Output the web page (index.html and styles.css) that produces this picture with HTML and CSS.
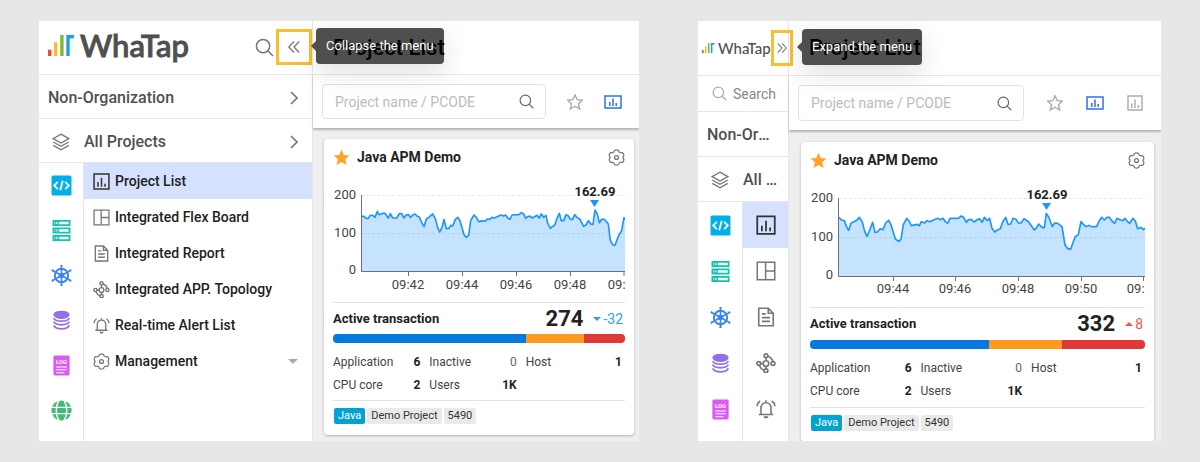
FILE: index.html
```
<!DOCTYPE html>
<html lang="en">
<head>
<meta charset="utf-8">
<title>WhaTap Project List</title>
<link rel="stylesheet" href="styles.css">
</head>
<body>
<svg class="sprite" aria-hidden="true">
  <symbol id="i-logo" viewBox="0 0 27 21">
    <path fill="#f04e23" d="M0 14.700h3.400V21H0z"/><path fill="#fdb733" d="M6 7.300h3.400V21H6z"/>
    <path fill="#7fb92b" d="M12.200 0h3.400v21h-3.400z"/><path fill="#1ea0e6" d="M18.300 0H26.500L25.500 3.500H21.700V21h-3.400z"/>
  </symbol>
  <symbol id="i-search" viewBox="0 0 20 20"><g fill="none" stroke="currentColor" stroke-width="1.600"><circle cx="8.500" cy="8.500" r="7"/><path d="M13.500 13.500L19 19"/></g></symbol>
  <symbol id="i-left" viewBox="0 0 12 12"><path fill="none" stroke="currentColor" stroke-width="1.300" d="M6 .5L.8 6L6 11.500M11.200 .5L6 6l5.200 5.500"/></symbol>
  <symbol id="i-right" viewBox="0 0 12 12"><path fill="none" stroke="currentColor" stroke-width="1.300" d="M.8 .5L6 6L.8 11.500M6 .5L11.200 6L6 11.500"/></symbol>
  <symbol id="i-chev" viewBox="0 0 8 14"><path fill="none" stroke="currentColor" stroke-width="1.600" d="M1 1l6 6l-6 6"/></symbol>
  <symbol id="i-layers" viewBox="0 0 18 18"><g fill="none" stroke="currentColor" stroke-width="1.400"><path d="M9 1.200L16.800 5.600L9 10L1.200 5.600z"/><path d="M1.200 9L9 13.300L16.800 9M1.200 12.400L9 16.800l7.800-4.400"/></g></symbol>
  <symbol id="i-code" viewBox="0 0 20 20"><rect x=".5" y=".5" width="19" height="19" rx="1.500" fill="#00b0e6"/><path fill="none" stroke="#fff" stroke-width="1.700" d="M6.500 6.500L3 10l3.500 3.500M13.500 6.500L17 10l-3.500 3.500M11.200 5.500L8.800 14.500"/></symbol>
  <symbol id="i-server" viewBox="0 0 20 20"><g fill="none" stroke="#10c5ad" stroke-width="1.700"><path d="M2.300 .9h15.400v4H2.300zM2.300 8h15.400v4H2.300zM2.300 15.100h15.400v4H2.300z"/><path d="M5.500 1v3.800M5.500 8v4M5.500 15.200v3.800" stroke-width="4"/></g><path fill="#fff" d="M4.600 2.100h1.600v1.600H4.600zM4.600 9.200h1.600v1.600H4.600zM4.600 16.300h1.600v1.600H4.600z"/></symbol>
  <symbol id="i-helm" viewBox="0 0 22 22"><g fill="none" stroke="#3b82f6" stroke-width="2"><circle cx="11" cy="11" r="7"/><path stroke-width="1.700" d="M11 0v22M1.200 5.500l19.600 11M1.200 16.500l19.600-11"/><path stroke-width="1.200" d="M9.800 .8h2.400M9.800 21.200h2.400M.8 6.500l1.200-2M20 17.500l1.200-2M.8 15.500l1.200 2M20 4.500l1.200 2"/></g><circle cx="11" cy="11" r="2.800" fill="#3b82f6"/></symbol>
  <symbol id="i-db" viewBox="0 0 20 22"><ellipse cx="10" cy="5" rx="8.500" ry="4.300" fill="#9270e8"/><path fill="none" stroke="#9270e8" stroke-width="1.900" d="M1.800 8.500c2.400 4.300 14 4.300 16.400 0M1.800 12.200c2.400 4.300 14 4.300 16.400 0M1.800 16c2.400 5 14 5 16.400 0"/></symbol>
  <symbol id="i-log" viewBox="0 0 18 22"><rect x=".5" y=".5" width="17" height="21" rx="1.500" fill="#d95af5"/><text x="9" y="9" class="log-text">LOG</text><path stroke="#fff" stroke-width="1.100" d="M3.500 12.500h11M3.500 15.500h11M3.500 18.500h8.500"/></symbol>
  <symbol id="i-globe" viewBox="0 0 22 22"><circle cx="11" cy="11" r="10.600" fill="#3fbb75"/><path fill="none" stroke="#fff" stroke-width="1.500" d="M0 7.700h22M0 14.300h22M8.500 0c-4 6-4 16 0 22M13.500 0c4 6 4 16 0 22"/></symbol>
  <symbol id="i-bars" viewBox="0 0 16 16"><path fill="none" stroke="currentColor" stroke-width="1.400" d="M1 1h14v14H1zM4.700 8.500V13M8 4.500V13M11.300 10V13"/></symbol>
  <symbol id="i-widebars" viewBox="0 0 18 14"><path fill="none" stroke="currentColor" stroke-width="1.500" d="M1 1h16v12H1zM5.800 7V11M9 3.500V11M12.200 8V11"/></symbol>
  <symbol id="i-flex" viewBox="0 0 16 16"><path fill="none" stroke="currentColor" stroke-width="1.200" d="M1 1h14v14H1zM7.700 1v14M7.700 8H15"/></symbol>
  <symbol id="i-report" viewBox="0 0 16 16"><path fill="none" stroke="currentColor" stroke-width="1.300" d="M2.200 1h7.600l4 4v10H2.200zM9.800 1v4h4M4.800 5.500h3M4.800 8.500h6.400M4.800 11.500h6.400"/></symbol>
  <symbol id="i-topo" viewBox="0 0 18 18"><g fill="none" stroke="currentColor" stroke-width="1.500"><circle cx="9" cy="9.500" r="2.500"/><circle cx="9" cy="2.500" r="1.700"/><circle cx="2.500" cy="9.500" r="1.700"/><circle cx="15.300" cy="9.500" r="1.700"/><circle cx="9" cy="16" r="1.700"/><path d="M9 4.200v2.800M9 12v2.300M4.200 9.500h2.300M10.700 3c2.500 1 4 2.500 4.500 4.800M3 11.200c1 2.500 2.500 3.800 4.300 4.500"/></g></symbol>
  <symbol id="i-bell" viewBox="0 0 18 18"><path fill="none" stroke="currentColor" stroke-width="1.400" d="M2.500 14h13M4.500 14V8.200c0-6.500 9-6.500 9 0V14M9 3.300V1.200M.9 6.500c.2-2 1.200-3.600 2.800-4.700M17.100 6.500c-.2-2-1.200-3.600-2.800-4.700"/><path fill="currentColor" d="M6.800 15.500h4.400c-.4 2.700-4 2.700-4.400 0z"/></symbol>
  <symbol id="i-gear" viewBox="0 0 18 18"><g fill="none" stroke="currentColor" stroke-width="1.300" stroke-linejoin="round"><path d="M6.800 1.500Q9 .2 11.200 1.500L11.800 3.200L13.300 4L15.200 3.700Q16.800 5 16.800 7L15.700 9L16.800 11Q16.800 13 15.200 14.300L13.300 14L11.800 14.800L11.200 16.500Q9 17.800 6.800 16.500L6.200 14.800L4.700 14L2.800 14.300Q1.200 13 1.200 11L2.300 9L1.200 7Q1.200 5 2.800 3.700L4.700 4L6.200 3.200z"/><circle cx="9" cy="9" r="2.100"/></g></symbol>
  <symbol id="i-star" viewBox="0 0 16 16"><path d="M8 .8l2.200 4.900 5.200.5-3.900 3.500 1.200 5.300L8 12.200 3.300 15l1.200-5.300L.6 6.200l5.200-.5z"/></symbol>
</svg>

<main class="stage">
  <section class="app">
    <aside class="side">
      <header class="side-head">
        <div class="logo"><svg class="logo-mark"><use href="#i-logo"/></svg><span>WhaTap</span></div>
        <button class="find" aria-label="Search"><svg><use href="#i-search"/></svg></button>
        <button class="toggle" aria-label="Collapse"><svg><use href="#i-left"/></svg><span class="tip" role="tooltip">Collapse the menu</span></button>
      </header>
      <a class="org" href="#"><span class="cut">Non-Organization</span><svg class="chev"><use href="#i-chev"/></svg></a>
      <a class="org" href="#"><svg class="layers"><use href="#i-layers"/></svg><span class="cut">All Projects</span><svg class="chev"><use href="#i-chev"/></svg></a>
      <div class="side-body">
        <nav class="rail" aria-label="Products">
          <a href="#" aria-label="Application"><svg><use href="#i-code"/></svg></a>
          <a href="#" aria-label="Server"><svg><use href="#i-server"/></svg></a>
          <a href="#" aria-label="Kubernetes"><svg><use href="#i-helm"/></svg></a>
          <a href="#" aria-label="Database"><svg><use href="#i-db"/></svg></a>
          <a href="#" aria-label="Log"><svg><use href="#i-log"/></svg></a>
          <a href="#" aria-label="Browser"><svg><use href="#i-globe"/></svg></a>
        </nav>
        <nav class="menu" aria-label="Projects">
          <a class="on" href="#"><svg><use href="#i-bars"/></svg><span>Project List</span></a>
          <a href="#"><svg><use href="#i-flex"/></svg><span>Integrated Flex Board</span></a>
          <a href="#"><svg><use href="#i-report"/></svg><span>Integrated Report</span></a>
          <a href="#"><svg><use href="#i-topo"/></svg><span>Integrated APP. Topology</span></a>
          <a href="#"><svg><use href="#i-bell"/></svg><span>Real-time Alert List</span></a>
          <a href="#"><svg><use href="#i-gear"/></svg><span>Management</span><i class="caret"></i></a>
        </nav>
      </div>
    </aside>
    <div class="content">
      <header class="title"><h1>Project List</h1></header>
      <div class="tools">
        <label class="field"><input type="text" placeholder="Project name / PCODE" aria-label="Project name or PCODE"><svg><use href="#i-search"/></svg></label>
        <button class="tool star" aria-label="Favorites"><svg><use href="#i-star"/></svg></button>
        <button class="tool wide" aria-label="Chart view"><svg><use href="#i-widebars"/></svg></button>
      </div>
      <div class="board">
        <article class="card">
          <header class="card-head"><svg class="fav"><use href="#i-star"/></svg><h2>Java APM Demo</h2><button class="gear" aria-label="Settings"><svg><use href="#i-gear"/></svg></button></header>
          <svg class="chart" viewBox="0 0 292 115" role="img" aria-label="Active transactions over time">
            <path class="gridline" d="M29 15.500H292M29 53.500H292"/>
            <g transform="translate(-18 -50) scale(.33333)">
              <path class="area" d="M140 424V259L147 259 152 265 160 265 165 256 173 256 180 262 187 244 192 254 207 249 213 254 220 264 226 251 233 264 245 264 253 251 260 251 267 264 273 255 280 254 287 262 293 255 300 252 307 259 313 261 320 278 327 290 334 267 341 262 353 252 361 266 368 293 374 306 381 293 387 268 394 296 402 295 407 286 413 288 421 268 428 262 435 272 447 314 454 322 461 316 467 272 477 255 484 262 491 275 505 272 511 274 517 267 524 268 531 262 538 264 558 255 565 258 572 255 579 265 585 268 591 255 612 254 619 248 626 252 632 265 639 259 646 259 652 264 659 260 666 256 672 264 679 252 686 262 693 256 698 279 706 295 712 290 719 286 726 265 733 250 739 272 746 272 753 254 760 258 766 268 773 268 779 254 786 262 794 267 806 289 813 285 820 272 827 282 834 283 840 240 847 253 853 278 860 268 868 268 880 282 886 332 894 345 900 346 912 314 920 302 927 263 932 270V424z"/>
              <path class="line" d="M140 259L147 259 152 265 160 265 165 256 173 256 180 262 187 244 192 254 207 249 213 254 220 264 226 251 233 264 245 264 253 251 260 251 267 264 273 255 280 254 287 262 293 255 300 252 307 259 313 261 320 278 327 290 334 267 341 262 353 252 361 266 368 293 374 306 381 293 387 268 394 296 402 295 407 286 413 288 421 268 428 262 435 272 447 314 454 322 461 316 467 272 477 255 484 262 491 275 505 272 511 274 517 267 524 268 531 262 538 264 558 255 565 258 572 255 579 265 585 268 591 255 612 254 619 248 626 252 632 265 639 259 646 259 652 264 659 260 666 256 672 264 679 252 686 262 693 256 698 279 706 295 712 290 719 286 726 265 733 250 739 272 746 272 753 254 760 258 766 268 773 268 779 254 786 262 794 267 806 289 813 285 820 272 827 282 834 283 840 240 847 253 853 278 860 268 868 268 880 282 886 332 894 345 900 346 912 314 920 302 927 263 932 270"/>
            </g>
            <path class="axis" d="M28.500 15V91.500H292M75.500 91v5M129.500 91v5M183.500 91v5M237.500 91v5M291 91v5"/>
            <g class="ytext"><text x="23" y="19">200</text><text x="23" y="57">100</text><text x="23" y="94">0</text></g>
            <g class="xtext"><text x="75" y="109">09:42</text><text x="129" y="109">09:44</text><text x="183" y="109">09:46</text><text x="237" y="109">09:48</text><text x="291" y="109">09:50</text></g>
            <path class="mark" d="M257 20h9l-4.500 7z"/><text class="peak" x="262" y="16">162.69</text>
          </svg>
          <div class="active"><h3>Active transaction</h3><strong>274</strong><span class="delta down"><i></i>-32</span></div>
          <div class="meter"><i class="ok" style="width:66%"></i><i class="warn" style="width:20%"></i><i class="bad" style="width:14%"></i></div>
          <dl class="stats">
            <div><dt>Application</dt><dd>6</dd></div><div><dt>Inactive</dt><dd class="zero">0</dd></div><div><dt>Host</dt><dd>1</dd></div>
            <div><dt>CPU core</dt><dd>2</dd></div><div><dt>Users</dt><dd>1K</dd></div>
          </dl>
          <footer class="tags"><span class="java">Java</span><span>Demo Project</span><span>5490</span></footer>
        </article>
      </div>
    </div>
  </section>

  <section class="app compact">
    <aside class="side">
      <header class="side-head">
        <div class="logo"><svg class="logo-mark"><use href="#i-logo"/></svg><span>WhaTap</span></div>
        <button class="toggle" aria-label="Expand"><svg><use href="#i-right"/></svg><span class="tip" role="tooltip">Expand the menu</span></button>
      </header>
      <button class="side-search"><svg><use href="#i-search"/></svg>Search</button>
      <a class="org" href="#"><span class="cut">Non-Organization</span></a>
      <a class="org" href="#"><svg class="layers"><use href="#i-layers"/></svg><span class="cut">All Projects</span></a>
      <div class="side-body">
        <nav class="rail" aria-label="Products, collapsed">
          <a href="#" aria-label="Application"><svg><use href="#i-code"/></svg></a>
          <a href="#" aria-label="Server"><svg><use href="#i-server"/></svg></a>
          <a href="#" aria-label="Kubernetes"><svg><use href="#i-helm"/></svg></a>
          <a href="#" aria-label="Database"><svg><use href="#i-db"/></svg></a>
          <a href="#" aria-label="Log"><svg><use href="#i-log"/></svg></a>
        </nav>
        <nav class="menu" aria-label="Projects, collapsed">
          <a class="on" href="#" aria-label="Project List"><svg><use href="#i-bars"/></svg></a>
          <a href="#" aria-label="Flex Board"><svg><use href="#i-flex"/></svg></a>
          <a href="#" aria-label="Report"><svg><use href="#i-report"/></svg></a>
          <a href="#" aria-label="Topology"><svg><use href="#i-topo"/></svg></a>
          <a href="#" aria-label="Alerts"><svg><use href="#i-bell"/></svg></a>
        </nav>
      </div>
    </aside>
    <div class="content">
      <header class="title"><h1>Project List</h1></header>
      <div class="tools">
        <label class="field"><input type="text" placeholder="Project name / PCODE" aria-label="Project name or PCODE"><svg><use href="#i-search"/></svg></label>
        <button class="tool star" aria-label="Favorites"><svg><use href="#i-star"/></svg></button>
        <button class="tool wide" aria-label="Chart view"><svg><use href="#i-widebars"/></svg></button>
        <button class="tool" aria-label="Compact view"><svg><use href="#i-bars"/></svg></button>
      </div>
      <div class="board">
        <article class="card">
          <header class="card-head"><svg class="fav"><use href="#i-star"/></svg><h2>Java APM Demo</h2><button class="gear" aria-label="Settings"><svg><use href="#i-gear"/></svg></button></header>
          <svg class="chart" viewBox="0 0 335 117" role="img" aria-label="Active transactions over time">
            <path class="gridline" d="M29 15.500H335M29 54.500H335"/>
            <g transform="translate(-20 -53) scale(.33333)">
              <path class="area" d="M147 438V262L154 270 163 272 169 289 176 301 183 280 200 271 208 262 217 276 224 304 231 319 238 303 248 277 255 307 262 306 271 296 279 299 287 279 296 271 303 284 316 327 326 334 333 328 340 284 350 265 357 273 364 287 381 283 388 287 394 275 404 279 411 272 419 275 443 265 451 269 459 265 466 275 473 280 480 265 505 265 514 258 521 262 529 277 535 269 545 269 552 276 560 270 568 266 576 277 583 262 592 272 599 265 606 295 614 306 622 300 631 296 638 276 647 262 654 283 662 282 669 265 678 268 685 279 693 279 702 266 716 276 733 300 740 293 746 282 757 293 763 293 769 250 777 263 787 290 794 279 803 280 816 290 825 345 832 355 842 358 855 321 865 314 873 275 880 283 888 290 897 286 903 290 920 290 928 272 935 262 943 270 951 262 958 262 966 273 974 280 981 265 990 269 999 272 1005 265 1013 275 1019 280 1029 265 1036 273 1043 296 1053 292 1060 299 1065 294V438z"/>
              <path class="line" d="M147 262L154 270 163 272 169 289 176 301 183 280 200 271 208 262 217 276 224 304 231 319 238 303 248 277 255 307 262 306 271 296 279 299 287 279 296 271 303 284 316 327 326 334 333 328 340 284 350 265 357 273 364 287 381 283 388 287 394 275 404 279 411 272 419 275 443 265 451 269 459 265 466 275 473 280 480 265 505 265 514 258 521 262 529 277 535 269 545 269 552 276 560 270 568 266 576 277 583 262 592 272 599 265 606 295 614 306 622 300 631 296 638 276 647 262 654 283 662 282 669 265 678 268 685 279 693 279 702 266 716 276 733 300 740 293 746 282 757 293 763 293 769 250 777 263 787 290 794 279 803 280 816 290 825 345 832 355 842 358 855 321 865 314 873 275 880 283 888 290 897 286 903 290 920 290 928 272 935 262 943 270 951 262 958 262 966 273 974 280 981 265 990 269 999 272 1005 265 1013 275 1019 280 1029 265 1036 273 1043 296 1053 292 1060 299 1065 294"/>
            </g>
            <path class="axis" d="M28.500 15V93.500H335M83.500 93v5M145.500 93v5M208.500 93v5M271.500 93v5M333.500 93v5"/>
            <g class="ytext"><text x="23" y="19">200</text><text x="23" y="58">100</text><text x="23" y="96">0</text></g>
            <g class="xtext"><text x="83" y="110">09:44</text><text x="145" y="110">09:46</text><text x="208" y="110">09:48</text><text x="271" y="110">09:50</text><text x="333" y="110">09:52</text></g>
            <path class="mark" d="M232 20h9l-4.500 7z"/><text class="peak" x="237" y="16">162.69</text>
          </svg>
          <div class="active"><h3>Active transaction</h3><strong>332</strong><span class="delta up"><i></i>8</span></div>
          <div class="meter"><i class="ok" style="width:53.500%"></i><i class="warn" style="width:21.800%"></i><i class="bad" style="width:24.700%"></i></div>
          <dl class="stats">
            <div><dt>Application</dt><dd>6</dd></div><div><dt>Inactive</dt><dd class="zero">0</dd></div><div><dt>Host</dt><dd>1</dd></div>
            <div><dt>CPU core</dt><dd>2</dd></div><div><dt>Users</dt><dd>1K</dd></div>
          </dl>
          <footer class="tags"><span class="java">Java</span><span>Demo Project</span><span>5490</span></footer>
        </article>
      </div>
    </div>
  </section>
</main>
</body>
</html>
```
FILE: styles.css
```
* { box-sizing: border-box; }
body { margin: 0; background: #e7e7e7; color: #222; font: 14px/20px Roboto, "Noto Sans", sans-serif; }
h1, h2, h3, dl, dd { margin: 0; }
a { color: inherit; text-decoration: none; }
button { margin: 0; padding: 0; border: 0; background: none; color: inherit; font: inherit; cursor: pointer; }
svg { display: block; flex: none; }
.sprite { display: none; }
.log-text { font: 700 6px Roboto, sans-serif; fill: #fff; text-anchor: middle; }

.stage { display: grid; grid-template-columns: 600fr 463fr; gap: 59px; height: 100vh; padding: 21px 39px; }
.app { --head: 54px; --row: 45px; display: grid; grid-template-columns: 274px minmax(0, 1fr); min-height: 0; background: #fff; overflow: hidden; }
.compact { --head: 55px; --row: 46px; grid-template-columns: 91px minmax(0, 1fr); }

.side { display: flex; flex-direction: column; min-width: 0; min-height: 0; border-right: 1px solid #e6e6e6; }
.side-head { display: flex; align-items: center; flex: none; height: var(--head); padding: 0 0 1px 9px; border-bottom: 1px solid #e6e6e6; }
.logo { display: flex; align-items: center; flex: 1; gap: 5px; padding-bottom: 4px; color: #4f4f4f; font: 500 31px/36px Lato, sans-serif; -webkit-text-stroke: 1px #4f4f4f; }
.logo-mark { width: 27px; height: 21px; }
.find { margin-right: 2px; color: #777; }
.find svg { width: 19px; height: 19px; }
.toggle { position: relative; z-index: 2; display: grid; place-items: center; flex: none; width: 36px; height: 36px; border: 3px solid #f8c02c; color: #777; }
.toggle > svg { width: 12px; height: 12px; }
.tip { position: absolute; left: calc(100% + 7px); top: -4px; padding: 8px 10px; border-radius: 4px; background: rgba(0, 0, 0, .69); box-shadow: 0 8px 28px rgba(0, 0, 0, .13); color: #fff; font-size: 13px; line-height: 20px; white-space: nowrap; }
.tip::before { content: ""; position: absolute; right: 100%; top: 13px; border: 5px solid transparent; border-left: 0; border-right-color: #505050; }
.org { display: flex; align-items: center; flex: none; height: 44px; padding: 2px 14px 0 9px; border-bottom: 1px solid #e6e6e6; color: #505050; font-size: 16px; font-weight: 500; }
.cut { flex: 1; min-width: 0; overflow: hidden; text-overflow: ellipsis; white-space: nowrap; }
.chev { width: 8px; height: 14px; color: #777; }
.layers { width: 18px; height: 18px; margin: 0 14px 0 4px; color: #777; }
.side-search { display: flex; align-items: center; flex: none; gap: 6px; height: 36px; padding-left: 14px; border-bottom: 1px solid #e6e6e6; color: #888; }
.side-search svg { width: 15px; height: 15px; color: #aaa; }

.side-body { display: flex; flex: 1; min-height: 0; }
.rail { flex: none; width: 45px; border-right: 1px solid #e6e6e6; }
.rail a { display: grid; place-items: center; height: var(--row); }
.rail svg { width: 21px; height: 21px; }
.menu { flex: 1; }
.menu a { display: flex; align-items: center; gap: 5px; height: 36px; padding: 0 14px 0 9px; font-weight: 500; }
.menu span { flex: 1; }
.menu svg { width: 17px; height: 17px; color: #777; }
.menu .on { background: #d6e0ff; }
.menu .on svg { color: #333; }
.caret { border: 5px solid transparent; border-top-color: #aaa; border-bottom: 0; }
.compact .side-head { padding-left: 4px; }
.compact .logo { gap: 3px; padding-bottom: 0; font-size: 15px; -webkit-text-stroke-width: 0; }
.compact .logo-mark { width: 13px; height: 10px; }
.compact .toggle { width: 22px; margin-right: -5px; }
.compact .toggle > svg { width: 10px; height: 10px; }
.compact .tip { left: calc(100% + 12px); }
.compact .org { height: 45px; padding-right: 12px; }
.compact .layers + .cut { margin-right: -8px; }
.compact .menu a { height: var(--row); justify-content: center; padding: 0; }
.compact .menu svg { width: 20px; height: 20px; }

.content { display: flex; flex-direction: column; min-width: 0; min-height: 0; background: #efefef; }
.title { flex: none; height: var(--head); padding: 13px 20px 0; background: #fff; border-bottom: 1px solid #e6e6e6; }
h1 { font-size: 22px; line-height: 28px; font-weight: 500; color: #000; }
.tools { display: flex; align-items: center; gap: 21px; padding: 9px 17px 9px 9px; background: #fff; box-shadow: 0 2px 2px rgba(0, 0, 0, .25); }
.compact .tools { gap: 23px; padding-right: 18px; }
.field { display: flex; align-items: center; flex: 1; min-width: 0; height: 35px; padding: 0 11px 0 12px; border: 1px solid #e2e2e2; border-radius: 4px; }
.compact .field { height: 36px; }
.field input { flex: 1; min-width: 0; padding: 0; border: 0; background: none; font: inherit; outline: 0; }
.field input::placeholder { color: #bbb; opacity: 1; }
.field svg { width: 15px; height: 15px; color: #666; }
.tool { color: #aaa; }
.tool svg { width: 16px; height: 16px; }
.star svg { fill: none; stroke: #aaa; stroke-width: 1.400; }
.wide { color: #2f6df6; }
.wide svg { width: 18px; height: 14px; }
.board { padding: 11px 5px 6px 11px; }
.compact .board { padding: 12px 7px 0 12px; }

.card { padding: 8px 9px 11px; border-radius: 4px; background: #fff; box-shadow: 0 1px 3px rgba(0, 0, 0, .25); }
.card-head { display: flex; align-items: center; gap: 7px; height: 20px; }
.fav { width: 17px; height: 17px; fill: #ffa32b; }
h2 { flex: 1; font-size: 14px; font-weight: 700; }
.gear { color: #777; }
.gear svg { width: 17px; height: 17px; }
.chart { width: 100%; height: auto; margin-top: 13px; overflow: hidden; }
.gridline { fill: none; stroke: #e6e9ee; stroke-dasharray: 3 2; }
.area { fill: #1e90ff; fill-opacity: .26; }
.line { fill: none; stroke: #1e96ff; stroke-width: 5; stroke-linejoin: round; }
.axis { fill: none; stroke: #6e7079; }
.ytext, .xtext { font-size: 13px; fill: #444; text-anchor: end; }
.xtext { text-anchor: middle; }
.mark { fill: #1e96fa; }
.peak { font-size: 13px; font-weight: 700; fill: #222; text-anchor: middle; }
.active { display: flex; align-items: center; margin-top: 7px; height: 32px; border-top: 1px solid #e2e2e2; }
.compact .active { height: 33px; }
h3 { flex: 1; font-size: 13px; font-weight: 700; }
.active strong { font-size: 22px; }
.delta { display: flex; align-items: center; gap: 2px; margin: 0 2px 0 10px; }
.delta i { border: 4px solid transparent; }
.down { color: #2c9ff5; }
.down i { border-top-color: currentColor; border-bottom: 0; }
.up { color: #f5544d; }
.up i { border-bottom-color: currentColor; border-top: 0; }
.meter { display: flex; height: 9px; border-radius: 4px; overflow: hidden; }
.ok { background: #047ae0; }
.warn { background: #ff9a1c; }
.bad { background: #e03737; }
.stats { display: grid; grid-template-columns: 33% 33% 1fr; row-gap: 3px; padding: 9px 0 5px; border-bottom: 1px solid #e2e2e2; font-size: 12px; }
.compact .stats { padding-bottom: 6px; }
.stats div { display: flex; justify-content: space-between; padding-right: 9px; }
.stats div:nth-child(3n) { padding-right: 3px; }
dt { color: #444; }
dd { font-weight: 700; }
.zero { font-weight: 400; color: #666; }
.tags { display: flex; gap: 2px; padding: 7px 1px 0; font-size: 11px; line-height: 16px; color: #333; }
.tags span { padding: 0 4px; border-radius: 2px; background: #eaeaea; }
.tags .java { background: #03a3d1; color: #fff; }
```
